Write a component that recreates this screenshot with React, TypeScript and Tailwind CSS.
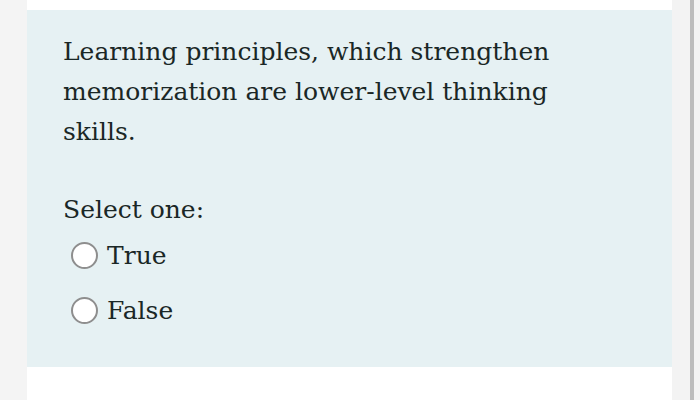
import React from "react";

const options = ["True", "False"];

const Radio: React.FC<{ label: string }> = ({ label }) => (
  <label className="flex h-[55px] items-center pl-[8px]">
    <span className="h-[27px] w-[27px] shrink-0 rounded-full border-2 border-[#8e8e8e] bg-white" />
    <span className="ml-[9px]">{label}</span>
  </label>
);

export default function App() {
  return (
    <div className="flex h-[400px] w-[700px] overflow-hidden bg-white">
      {/* left gutter */}
      <div className="w-[27px] shrink-0 bg-[#f4f4f4]" />

      <div className="flex-1 pt-[10px]">
        <div
          className="bg-[#e6f1f3] pl-[36px] pr-6 pt-[22px] pb-[29px] text-[25px] leading-[40px] text-[#1a2726]"
          style={{ fontFamily: '"DejaVu Serif", "Liberation Serif", serif' }}
        >
          <p className="w-[510px]">
            Learning principles, which strengthen memorization are lower-level thinking skills.
          </p>
          <p className="mt-[38px]">Select one:</p>
          <div className="mt-[-2px]">
            {options.map((o) => (
              <Radio key={o} label={o} />
            ))}
          </div>
        </div>
      </div>

      {/* scrollbar track */}
      <div className="flex w-[28px] shrink-0 bg-[#f3f3f3]">
        <div className="ml-[18px] w-[4px] bg-[#bcbcbc]" />
      </div>
    </div>
  );
}
